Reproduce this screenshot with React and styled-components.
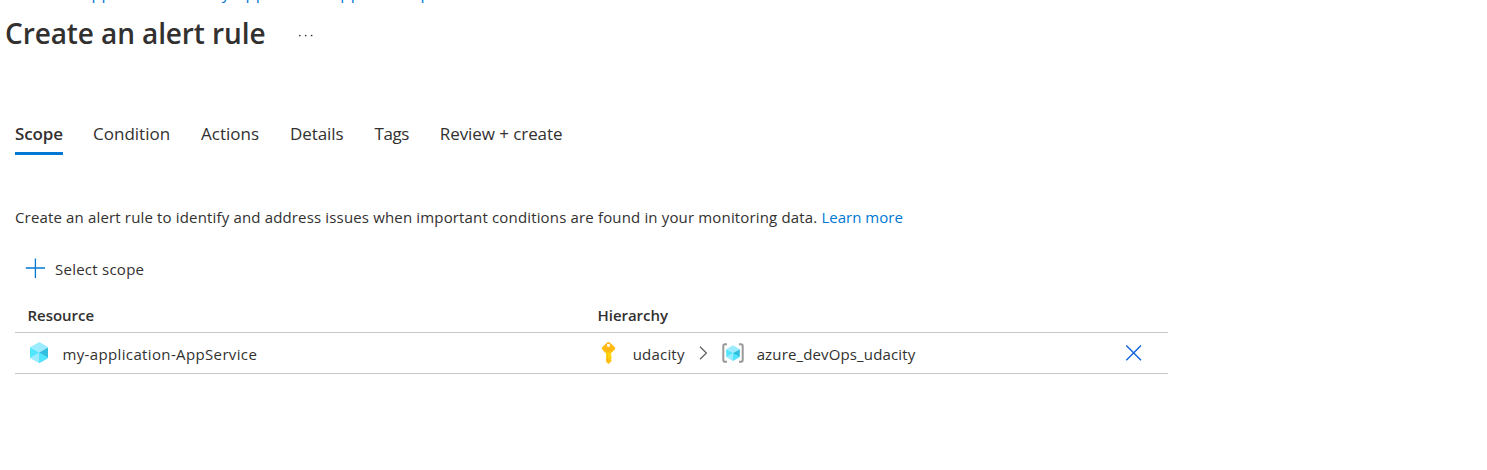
import React from "react";
import styled, { createGlobalStyle } from "styled-components";

const GlobalStyle = createGlobalStyle`
  * { box-sizing: border-box; }
  body {
    margin: 0;
    background: #fff;
    color: #323130;
    font: 400 15px/20px "Open Sans", "Noto Sans", sans-serif;
  }
`;

const Page = styled.main`
  height: 470px;
  overflow: hidden;
`;

const Breadcrumbs = styled.nav`
  display: flex;
  align-items: flex-end;
  height: 3px;
  overflow: hidden;
  padding-left: 7px;
  color: #0078d4;
  font-size: 16px;
  white-space: nowrap;
`;

const Crumb = styled.a`
  flex: none;
  width: ${(p) => p.$width}px;
  letter-spacing: ${(p) => p.$spacing || 0}px;
`;

const TitleBar = styled.header`
  display: flex;
  align-items: center;
  gap: 32.5px;
  padding: 12px 0 0 5px;
`;

const Title = styled.h1`
  margin: 0;
  font-size: 28px;
  font-weight: 600;
  line-height: 36px;
  letter-spacing: -0.1px;
`;

const MoreButton = styled.button`
  display: flex;
  padding: 4px 0 0;
  border: 0;
  background: none;
`;

const TabList = styled.nav`
  display: flex;
  gap: 31px;
  padding: 71px 0 0 15px;
`;

const Tab = styled.a`
  height: 33px;
  font-size: 17px;
  line-height: 24px;
  letter-spacing: ${(p) => p.$spacing || 0}px;
  font-weight: ${(p) => (p.$active ? 600 : 370)};
  border-bottom: ${(p) => (p.$active ? "3px solid #0078d4" : "none")};
  margin-right: ${(p) => (p.$active ? "-1px" : "0")};
`;

const Description = styled.p`
  margin: 52px 0 0 15px;
  letter-spacing: 0.157px;
`;

const Link = styled.a`
  color: #0078d4;
  letter-spacing: 0.02px;
`;

const CommandButton = styled.button`
  display: flex;
  align-items: center;
  gap: 10px;
  margin: 30px 0 0 25px;
  padding: 0;
  border: 0;
  background: none;
  color: inherit;
  font: inherit;
`;

const Table = styled.section`
  width: 1153px;
  margin: 24px 0 0 15px;
`;

const TableRow = styled.div`
  display: grid;
  grid-template-columns: 570px 528px 1fr;
  align-items: center;
  height: 41px;
  padding-left: 12px;
  border-bottom: 1px solid #c8c8c8;
`;

const HeaderRow = styled(TableRow)`
  height: 30px;
  align-items: start;
  font-weight: 600;
`;

const Cell = styled.div`
  display: flex;
  align-items: center;
`;

const Label = styled.span`
  padding-top: 2px;
  letter-spacing: ${(p) => p.$spacing}px;
  margin: 0 ${(p) => p.$right || 0}px 0 ${(p) => p.$left || 0}px;
`;

const HeaderLabel = styled.span`
  padding: 2px 0 0 0.6px;
  letter-spacing: -0.05px;
`;

const Icon = styled.svg`
  flex: none;
  display: block;
  margin-left: ${(p) => p.$left || 0}px;
  margin-bottom: ${(p) => p.$bottom || 0}px;
`;

const IconButton = styled.button`
  display: flex;
  padding: 0;
  border: 0;
  background: none;
`;

function CubeFaces() {
  return (
    <>
      <path d="M9 0 18 5.2 9 10.4 0 5.2Z" fill="#9cebff" />
      <path d="M0 5.2 9 10.4V20.8L0 15.6Z" fill="#50e6ff" />
      <path d="M18 5.2V15.6L9 20.8V10.4Z" fill="#32bedd" />
      <path d="M0 15.6 9 10.4V20.8Z" fill="#9cebff" />
      <path d="M18 15.6 9 10.4V20.8Z" fill="#50e6ff" />
    </>
  );
}

function CubeIcon() {
  return (
    <Icon $left={2.5} $bottom={1} width="18.5" height="21" viewBox="0 0 18 20.8" preserveAspectRatio="none">
      <CubeFaces />
    </Icon>
  );
}

function KeyIcon() {
  return (
    <Icon $left={4} width="15" height="22" viewBox="0 0 15 22">
      <defs>
        <linearGradient id="keyFill" x1="0" y1="0" x2="0" y2="1">
          <stop offset="0" stopColor="#feb117" />
          <stop offset="0.3" stopColor="#ffbd11" />
          <stop offset="0.6" stopColor="#ffd70f" />
          <stop offset="1" stopColor="#fdb814" />
        </linearGradient>
      </defs>
      <path
        fill="url(#keyFill)"
        fillRule="evenodd"
        d="M6.2.5Q7.5-.3 8.8.5L13.6 5.1Q14.8 6.3 13.6 7.7L9.9 11.6V13L11 14 9.9 15.1 11 16.2 9.9 17.3 10.5 18.1V19.2L8.1 21.6Q7.5 22.2 6.9 21.6L5 19.5V11.6L1.4 7.7Q.2 6.3 1.4 5.1ZM7.5 1.7A1.6 1.6 0 1 0 7.5 4.9 1.6 1.6 0 1 0 7.5 1.7Z"
      />
      <path d="M4.1 7.3H10.9M4.1 9H10.9" stroke="#ff9300" strokeWidth=".8" strokeLinecap="round" opacity=".45" />
      <path d="M6.5 12.5V19.5" stroke="#ff9300" strokeWidth=".7" opacity=".4" />
    </Icon>
  );
}

function ResourceGroupIcon() {
  return (
    <Icon $left={14} width="22" height="20" viewBox="0 0 22 20">
      <path
        d="M5 1.3H3.1Q1.3 1.3 1.3 3.1V16.9Q1.3 18.7 3.1 18.7H5M17 1.3H18.9Q20.7 1.3 20.7 3.1V16.9Q20.7 18.7 18.9 18.7H17"
        fill="none"
        stroke="#999"
        strokeWidth="2"
      />
      <g transform="translate(4.2 2.3) scale(.755 .74)">
        <CubeFaces />
      </g>
    </Icon>
  );
}

export default function App() {
  return (
    <Page>
      <GlobalStyle />
      <Breadcrumbs>
        <Crumb $width={74.5}>Home</Crumb>
        <Crumb $width={125}>App Services</Crumb>
        <Crumb $width={214} $spacing={0.52}>my-application-AppService</Crumb>
        <Crumb $width={60}>plan</Crumb>
      </Breadcrumbs>
      <TitleBar>
        <Title>Create an alert rule</Title>
        <MoreButton aria-label="More">
          <svg width="16" height="4" viewBox="0 0 16 4">
            <g fill="#323130">
              <circle cx="1.8" cy="2.5" r=".85" />
              <circle cx="7.7" cy="2.5" r=".85" />
              <circle cx="13.6" cy="2.5" r=".85" />
            </g>
          </svg>
        </MoreButton>
      </TitleBar>
      <TabList>
        <Tab $active $spacing={-0.1}>Scope</Tab>
        <Tab>Condition</Tab>
        <Tab>Actions</Tab>
        <Tab $spacing={-0.1}>Details</Tab>
        <Tab $spacing={-0.45}>Tags</Tab>
        <Tab $spacing={-0.08}>Review + create</Tab>
      </TabList>
      <Description>
        Create an alert rule to identify and address issues when important conditions are found in your
        monitoring data. <Link>Learn more</Link>
      </Description>
      <CommandButton>
        <Icon width="20" height="20" viewBox="0 0 20 20">
          <path d="M10.4 .4V20M.8 10H20" stroke="#0078d4" strokeWidth="1.3" />
        </Icon>
        <Label $spacing={0.25}>Select scope</Label>
      </CommandButton>
      <Table>
        <HeaderRow>
          <HeaderLabel>Resource</HeaderLabel>
          <HeaderLabel>Hierarchy</HeaderLabel>
        </HeaderRow>
        <TableRow>
          <Cell>
            <CubeIcon />
            <Label $left={14.5} $spacing={0.36}>my-application-AppService</Label>
          </Cell>
          <Cell>
            <KeyIcon />
            <Label $left={16.7} $right={14} $spacing={0.2}>udacity</Label>
            <Icon width="9" height="14" viewBox="0 0 9 14">
              <path d="M1 .7 7.4 7 1 13.3" fill="none" stroke="#605e5c" strokeWidth="1.2" />
            </Icon>
            <ResourceGroupIcon />
            <Label $left={13} $spacing={0.14}>azure_devOps_udacity</Label>
          </Cell>
          <IconButton aria-label="Remove">
            <Icon width="17" height="16" viewBox="0 0 17 16">
              <path d="M1.3 .5 16 15.2M16 .5 1.3 15.2" stroke="#0f62e0" strokeWidth="1.4" />
            </Icon>
          </IconButton>
        </TableRow>
      </Table>
    </Page>
  );
}
